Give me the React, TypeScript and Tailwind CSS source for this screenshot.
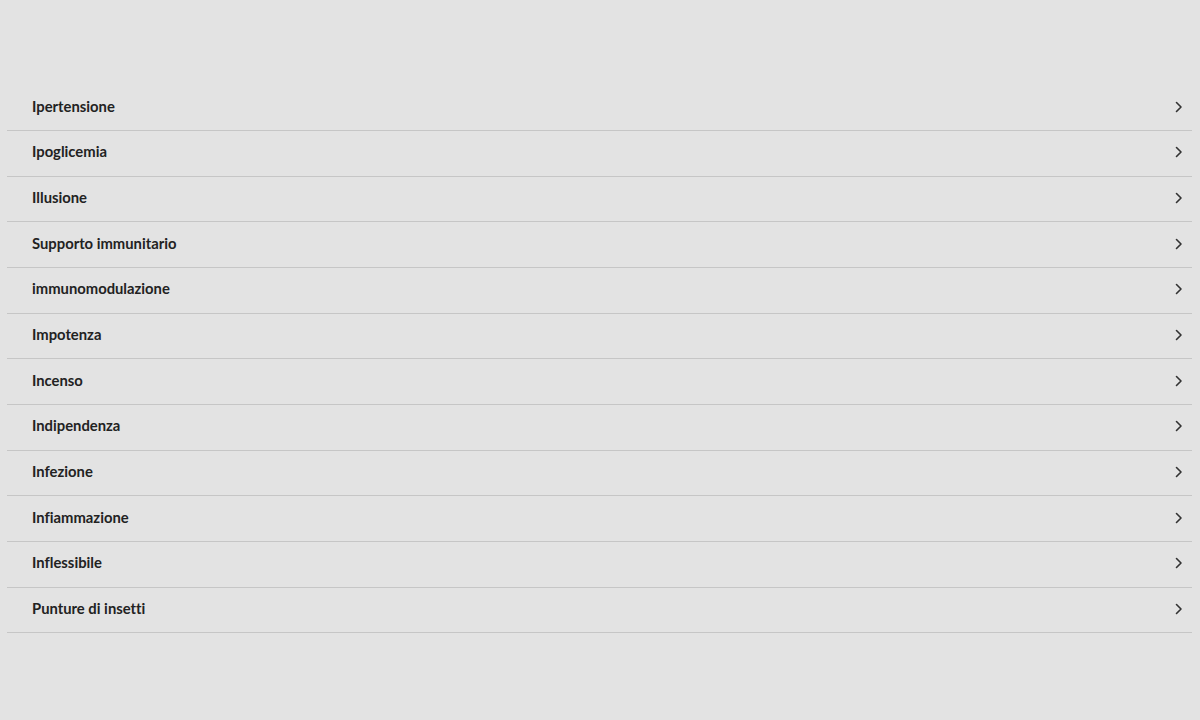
import React from "react";

const items = [
  "Ipertensione",
  "Ipoglicemia",
  "Illusione",
  "Supporto immunitario",
  "immunomodulazione",
  "Impotenza",
  "Incenso",
  "Indipendenza",
  "Infezione",
  "Infiammazione",
  "Inflessibile",
  "Punture di insetti",
];

export default function App() {
  return (
    <div
      className="w-[1200px] h-[720px] bg-[#e3e3e3] overflow-hidden [font-variant-ligatures:none]"
      style={{ fontFamily: "Lato, 'Noto Sans', sans-serif" }}
    >
      <div className="pt-[85.5px] pl-[7px] pr-[8px]">
        {items.map((t) => (
          <div
            key={t}
            className="flex items-center justify-between h-[45.67px] border-b border-[#c6c6c6] pl-[25px] pr-[9px] pb-[4px]"
          >
            <span className="text-[14.8px] font-bold text-[#222222]">{t}</span>
            <svg width="8" height="12" viewBox="0 0 8 12" fill="none" className="mt-[2px]">
              <path d="M1.5 1.5 L6 6 L1.5 10.5" stroke="#333" strokeWidth="1.6" strokeLinecap="round" strokeLinejoin="round" />
            </svg>
          </div>
        ))}
      </div>
    </div>
  );
}
